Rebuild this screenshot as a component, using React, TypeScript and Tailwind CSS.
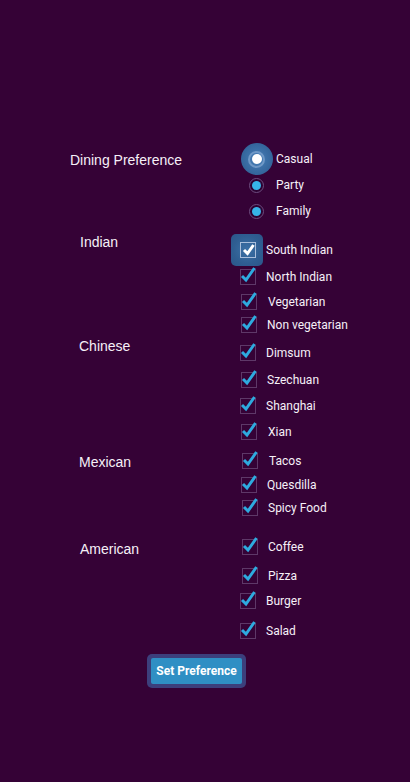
import React from "react";

type Item = { label: string; mt: number; ml: number; gap: number; focus?: boolean };

const radios = [
  { label: "Casual", mt: 0, focus: true },
  { label: "Party", mt: 6 },
  { label: "Family", mt: 6 },
];

const checks: Item[] = [
  { label: "South Indian", mt: 19, ml: 0, gap: 10, focus: true },
  { label: "North Indian", mt: 7, ml: 0, gap: 10 },
  { label: "Vegetarian", mt: 5, ml: 1, gap: 11 },
  { label: "Non vegetarian", mt: 3, ml: 1, gap: 10 },
  { label: "Dimsum", mt: 8, ml: 0, gap: 10 },
  { label: "Szechuan", mt: 7, ml: 1, gap: 10 },
  { label: "Shanghai", mt: 6, ml: 0, gap: 10 },
  { label: "Xian", mt: 6, ml: 1, gap: 11 },
  { label: "Tacos", mt: 9, ml: 2, gap: 11 },
  { label: "Quesdilla", mt: 4, ml: 1, gap: 10 },
  { label: "Spicy Food", mt: 3, ml: 2, gap: 10 },
  { label: "Coffee", mt: 19, ml: 2, gap: 10 },
  { label: "Pizza", mt: 9, ml: 2, gap: 10 },
  { label: "Burger", mt: 5, ml: 0, gap: 10 },
  { label: "Salad", mt: 10, ml: 0, gap: 10 },
];

const textFont = { fontFamily: "Roboto, 'Liberation Sans', sans-serif" };
const labelFont = { fontFamily: "'Liberation Sans', Arial, sans-serif" };

function CheckBox({ focus }: { focus?: boolean }) {
  return (
    <div className="relative w-[16px] h-[16px] shrink-0">
      {focus && (
        <div className="absolute left-[-9px] top-[-8px] w-[32px] h-[32px] rounded-[5px] bg-[radial-gradient(circle,#3d72a8_0%,#2f5e92_60%,#2b568a_100%)]" />
      )}
      <div
        className={
          "absolute inset-0 border " +
          (focus ? "border-[#a9bedb]" : "border-[#5e3868]")
        }
      />
      <svg
        className="absolute left-0 top-[-3px] overflow-visible"
        width="18"
        height="18"
        viewBox="0 0 18 18"
      >
        <path
          d={focus ? "M4 11 L7.5 14.5 L13.5 6" : "M2 10 L6 14 L14.5 2"}
          fill="none"
          stroke={focus ? "#ffffff" : "#2eaadf"}
          strokeWidth="3"
          strokeLinecap="butt"
          strokeLinejoin="miter"
        />
      </svg>
    </div>
  );
}

function Radio({ focus }: { focus?: boolean }) {
  return (
    <div className="relative w-[15px] h-[15px] shrink-0 ml-[9px]">
      {focus ? (
        <>
          <div className="absolute left-[-8.5px] top-[-8.5px] w-[32px] h-[32px] rounded-full bg-[radial-gradient(circle,#4b84bd_0%,#3a6ea5_45%,#2c5a8e_100%)]" />
          <div className="absolute inset-[-1px] rounded-full border-2 border-[#8fb1d8]/60" />
          <div className="absolute left-[2.5px] top-[2.5px] w-[10px] h-[10px] rounded-full bg-white" />
        </>
      ) : (
        <>
          <div className="absolute inset-0 rounded-full border-[1.5px] border-[#6e4d80] bg-[#2c0232]" />
          <div className="absolute left-[3px] top-[3px] w-[9px] h-[9px] rounded-full bg-[#36b4e8]" />
        </>
      )}
    </div>
  );
}

export default function App() {
  return (
    <div className="w-[410px] h-[782px] bg-[#350236] text-[#f6f0f8] overflow-hidden">
      <div className="flex">
        <div className="w-[240px] shrink-0 pt-[152px] flex flex-col text-[14px] leading-[16px]" style={labelFont}>
          <div className="ml-[70px]">Dining Preference</div>
          <div className="ml-[80px] mt-[66px]">Indian</div>
          <div className="ml-[79px] mt-[88px]">Chinese</div>
          <div className="ml-[79px] mt-[100px]">Mexican</div>
          <div className="ml-[80px] mt-[71px]">American</div>
        </div>
        <div className="flex flex-col pt-[149px] text-[12px]" style={textFont}>
          {radios.map((r) => (
            <div
              key={r.label}
              className="flex items-center h-[20px]"
              style={{ marginTop: r.mt }}
            >
              <Radio focus={r.focus} />
              <span className="ml-[12px] leading-[14px]">{r.label}</span>
            </div>
          ))}
          {checks.map((c) => (
            <div
              key={c.label}
              className="flex items-center h-[20px]"
              style={{ marginTop: c.mt, marginLeft: c.ml }}
            >
              <CheckBox focus={c.focus} />
              <span className="leading-[14px]" style={{ marginLeft: c.gap }}>
                {c.label}
              </span>
            </div>
          ))}
        </div>
      </div>
      <div className="ml-[147px] mt-[13px]">
        <button
          className="w-[99px] h-[34px] rounded-[5px] bg-[#3c3f7c] p-[4px] flex"
          style={textFont}
        >
          <span className="flex-1 rounded-[2px] bg-[#2f8fc4] text-white font-bold text-[12px] flex items-center justify-center">
            Set Preference
          </span>
        </button>
      </div>
    </div>
  );
}
